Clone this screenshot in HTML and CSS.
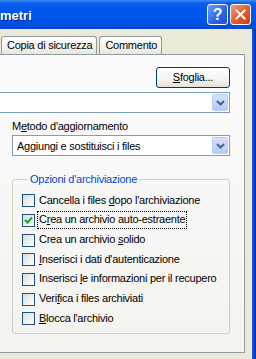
FILE: index.html
```html
<!DOCTYPE html>
<html lang="it">
<head>
  <meta charset="UTF-8">
  <title>Parametri</title>
  <link rel="stylesheet" href="styles.css">
</head>
<body>
  <div class="window">
    <header class="titlebar">
      <span class="title">metri</span>
      <div class="caption-buttons">
        <button class="cap help">?</button>
        <button class="cap close">
          <svg viewBox="0 0 21 21" width="21" height="21">
            <path d="M6 6 L15 15 M15 6 L6 15" stroke="#fff" stroke-width="2.2" stroke-linecap="square" fill="none" />
          </svg>
        </button>
      </div>
    </header>

    <div class="frame">
      <div class="client">
        <div class="tabs">
          <div class="tab">Copia di sicurezza</div>
          <div class="tab">Commento</div>
        </div>

        <div class="panel">
          <div class="browse-row">
            <button class="btn"><u>S</u>foglia...</button>
          </div>

          <div class="combo combo-path">
            <span class="combo-text"></span>
            <span class="drop"><svg viewBox="0 0 9 6" width="9" height="6"><path d="M1 1 L4.5 4.5 L8 1" stroke="#4d6185" stroke-width="2" fill="none" /></svg></span>
          </div>

          <div class="field-label">M<u>e</u>todo d'aggiornamento</div>
          <div class="combo combo-method">
            <span class="combo-text">Aggiungi e sostituisci i files</span>
            <span class="drop"><svg viewBox="0 0 9 6" width="9" height="6"><path d="M1 1 L4.5 4.5 L8 1" stroke="#4d6185" stroke-width="2" fill="none" /></svg></span>
          </div>

          <fieldset class="group">
            <legend>Opzioni d'archiviazione</legend>
            <div class="check-row"><span class="box"></span><span class="check-text">Cancella i files <u>d</u>opo l'archiviazione</span></div>
            <div class="check-row"><span class="box checked"><svg viewBox="0 0 11 11" width="11" height="11"><path d="M2 5 L4.5 7.5 L9 2.5" stroke="#21a121" stroke-width="2" fill="none" /></svg></span><span class="check-text focused">C<u>r</u>ea un archivio auto-estraente</span></div>
            <div class="check-row"><span class="box"></span><span class="check-text">Crea un archivio <u>s</u>olido</span></div>
            <div class="check-row"><span class="box"></span><span class="check-text"><u>I</u>nserisci i dati d'autenticazione</span></div>
            <div class="check-row"><span class="box"></span><span class="check-text">Inserisci <u>l</u>e informazioni per il recupero</span></div>
            <div class="check-row"><span class="box"></span><span class="check-text">Veri<u>f</u>ica i files archiviati</span></div>
            <div class="check-row"><span class="box"></span><span class="check-text"><u>B</u>locca l'archivio</span></div>
          </fieldset>
        </div>
      </div>
      <div class="frame-right"></div>
    </div>
  </div>
</body>
</html>
```

FILE: styles.css
```css
/* Page */
html, body {
  margin: 0;
  padding: 0;
}

body {
  width: 256px;
  height: 359px;
  overflow: hidden;
  font-family: "Liberation Sans", Arial, sans-serif;
  font-size: 11px;
  letter-spacing: -0.25px;
  color: #000;
}

.window {
  display: flex;
  flex-direction: column;
  height: 359px;
}

/* Title bar */
.titlebar {
  display: flex;
  align-items: center;
  justify-content: space-between;
  height: 29px;
  flex: none;
  background: linear-gradient(#3d8ef5 0, #0a60e8 3px, #0058ee 8px, #0055e7 20px, #0048d2 29px);
}

.title {
  color: #fff;
  font-weight: bold;
  font-size: 13px;
  letter-spacing: 0;
  text-shadow: 1px 1px 0 #0a1e8c;
  margin-top: 1px;
}

.caption-buttons {
  display: flex;
  gap: 2px;
  margin-right: 5px;
}

.cap {
  all: unset;
  box-sizing: border-box;
  width: 21px;
  height: 21px;
  border: 1px solid #fff;
  border-radius: 3px;
  display: flex;
  align-items: center;
  justify-content: center;
}

.help {
  background: linear-gradient(135deg, #6a9cf8, #2a63e6 60%, #1a4fd6);
  color: #fff;
  font-weight: bold;
  font-size: 16px;
  font-family: "Liberation Sans", Arial, sans-serif;
}

.close {
  background: linear-gradient(135deg, #f09c7c, #e35a2e 55%, #c7401a);
}

.close svg {
  display: block;
}

/* Frame */
.frame {
  display: flex;
  flex: 1;
  min-height: 0;
}

.client {
  flex: 1;
  background: #ece9d8;
  overflow: hidden;
  padding-top: 7px;
}

.frame-right {
  width: 4px;
  background: linear-gradient(to right, #1662e8, #0842c8, #0027b0);
}

/* Tabs */
.tabs {
  display: flex;
  gap: 2px;
  padding-left: 1px;
  height: 18px;
}

.tab {
  box-sizing: border-box;
  height: 18px;
  padding: 1px 4px 0 5px;
  border: 1px solid #919b9c;
  border-bottom: none;
  border-radius: 3px 3px 0 0;
  background: linear-gradient(#fefefe, #f4f3ee 60%, #e8e6dc);
  line-height: 15px;
}

/* Tab page */
.panel {
  box-sizing: border-box;
  width: 257px;
  height: 299px;
  margin-left: -12px;
  padding: 12px 14px 0 12px;
  border: 1px solid #919b9c;
  background: linear-gradient(#fcfcfe, #f4f3ee);
}

.browse-row {
  display: flex;
  justify-content: flex-end;
}

.btn {
  all: unset;
  box-sizing: border-box;
  width: 74px;
  height: 21px;
  border: 1px solid #003c74;
  border-radius: 3px;
  background: linear-gradient(#ffffff, #f6f5f0 60%, #e3e1d8);
  text-align: center;
  line-height: 19px;
  font-size: 11px;
  letter-spacing: -0.25px;
}

/* Combos */
.combo {
  box-sizing: border-box;
  display: flex;
  align-items: center;
  height: 21px;
  border: 1px solid #7f9db9;
  background: #fff;
  padding: 1px;
}

.combo-path {
  margin-top: 4px;
  margin-left: -8px;
}

.combo-method {
  margin-top: 2px;
  margin-left: 11px;
}

.combo-text {
  flex: 1;
  padding-left: 3px;
}

.drop {
  box-sizing: border-box;
  width: 16px;
  height: 17px;
  border: 1px solid #b9cdfb;
  border-radius: 2px;
  background: linear-gradient(#d4e1fd, #b8cbf6);
  display: flex;
  align-items: center;
  justify-content: center;
}

.drop svg {
  display: block;
}

.field-label {
  margin: 7px 0 0 11px;
  line-height: 13px;
}

/* Group box */
.group {
  margin: 17px 0 0 11px;
  padding: 5px 0 4px 9px;
  border: 1px solid #d0d0bf;
  border-radius: 3px;
}

.group legend {
  padding: 0 2px;
  margin-left: 6px;
  color: #0046d5;
  line-height: 13px;
}

.check-row {
  display: flex;
  align-items: center;
  gap: 2px;
  height: 19.67px;
}

.box {
  box-sizing: border-box;
  width: 13px;
  height: 13px;
  border: 1px solid #1c5180;
  background: linear-gradient(135deg, #dcdcd7, #f8f8f6 80%, #ffffff);
  display: flex;
  align-items: center;
  justify-content: center;
}

.box svg {
  display: block;
}

.check-text {
  padding: 1px 1px 2px 1px;
  border: 1px dotted transparent;
  line-height: 13px;
}

.check-text.focused {
  border-color: #000;
}
```
